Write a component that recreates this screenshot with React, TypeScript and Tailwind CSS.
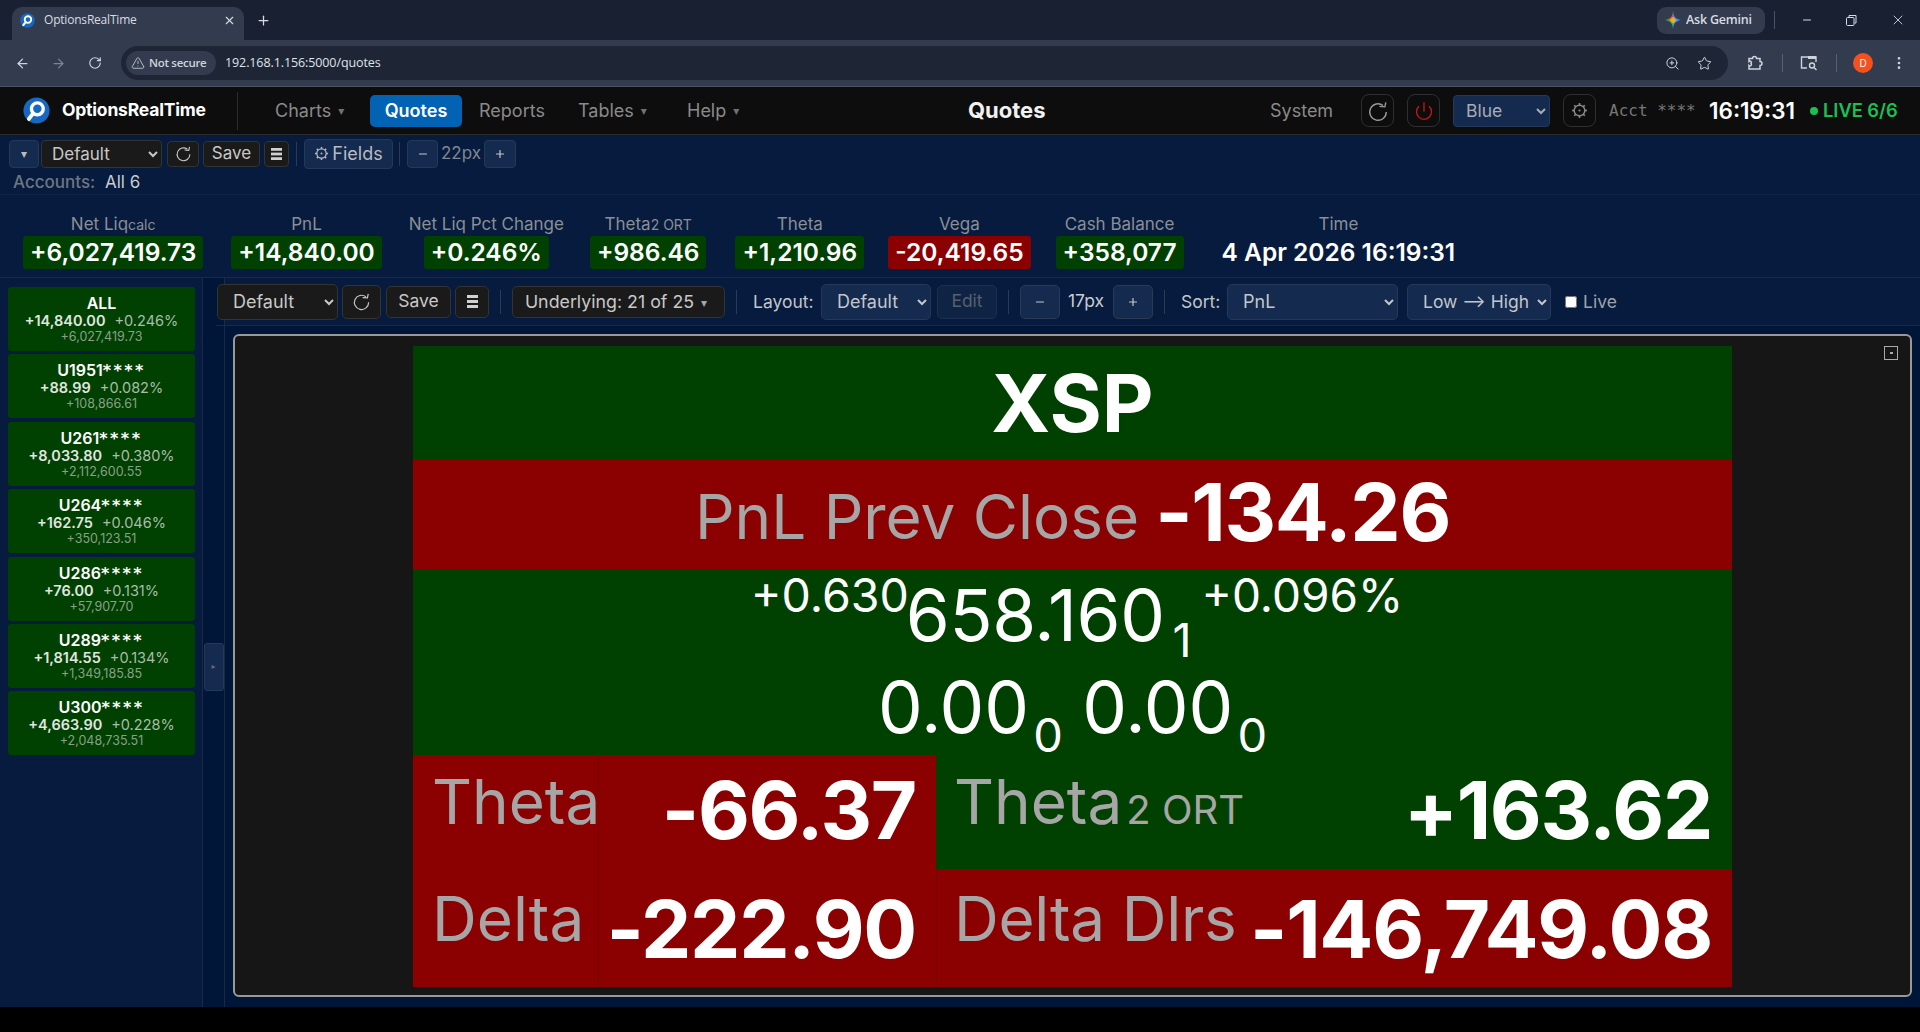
import React from "react";
import { ArrowLeft, ArrowRight, RotateCw, TriangleAlert, ZoomIn, Star, EllipsisVertical, X, Minus, Plus, Power } from "lucide-react";

const Logo = ({ size }: { size: number }) => (
  <svg width={size} height={size} viewBox="0 0 32 32">
    <circle cx="16" cy="16" r="15.5" fill="#1668c0" />
    <circle cx="17" cy="14" r="7" fill="none" stroke="#fff" strokeWidth="4" />
    <path d="M12 19.5 L7 26" stroke="#fff" strokeWidth="4.5" strokeLinecap="round" />
  </svg>
);

const Gemini = () => (
  <svg width="16" height="18" viewBox="0 0 14 16">
    <path d="M7 0 C7.4 4.5 9 7 14 8 L7 8 Z" fill="#4285f4" />
    <path d="M14 8 C9 9 7.4 11.5 7 16 L7 8 Z" fill="#5a8df5" />
    <path d="M7 16 C6.6 11.5 5 9 0 8 L7 8 Z" fill="#34a853" />
    <path d="M0 8 C5 7 6.6 4.5 7 0 L7 8 Z" fill="#ea4335" />
    <path d="M4 8 L7 5 L10 8 L7 11 Z" fill="#fbbc04" opacity="0.85" />
  </svg>
);

const Glyph = ({ className, children }: { className: string; children: React.ReactNode }) => (
  <span className={"font-['DejaVu_Sans',sans-serif] leading-none " + className}>{children}</span>
);

const Reload = ({ size }: { size: number }) => (
  <svg width={size} height={size} viewBox="0 0 24 24" fill="none" stroke="currentColor" strokeWidth="1.5">
    <path d="M17.5 6 A9 9 0 1 0 21 13" />
    <path d="M13.5 7 L19.5 7.5 L20.5 2.5" />
  </svg>
);

const Gear = ({ size }: { size: number }) => (
  <svg width={size} height={size} viewBox="0 0 24 24" fill="none" stroke="currentColor" strokeWidth="2">
    <circle cx="12" cy="12" r="7.5" />
    <circle cx="12" cy="12" r="1.5" fill="currentColor" stroke="none" />
    {[0, 45, 90, 135, 180, 225, 270, 315].map((a) => (
      <path key={a} d="M12 1.5 V4.5" strokeWidth="2.4" transform={`rotate(${a} 12 12)`} />
    ))}
  </svg>
);

const Bars = ({ w, h }: { w: number; h: number }) => (
  <svg width={w} height={h} viewBox="0 0 12 13" preserveAspectRatio="none" fill="currentColor">
    <rect x="0" y="0" width="12" height="3" />
    <rect x="0" y="5" width="12" height="3" />
    <rect x="0" y="10" width="12" height="3" />
  </svg>
);

const Caret = () => <Glyph className="text-[12px] ml-[7px] opacity-80">▾</Glyph>;

const Tb = ({ className, children }: { className: string; children: React.ReactNode }) => (
  <button className={"flex items-center justify-center rounded border shrink-0 " + className}>{children}</button>
);

const Metric = ({ label, sub, value, red, plain }: { label: string; sub?: string; value: string; red?: boolean; plain?: boolean }) => (
  <div className="flex flex-col items-center shrink-0">
    <div className="h-[17px] leading-[17px] text-[17px] text-[#8b8f96] whitespace-nowrap">
      {label}
      {sub && <span className="text-[14px]">{sub}</span>}
    </div>
    <div className={"mt-[3px] h-[33px] leading-[33px] px-[7px] rounded-[3px] text-[24.5px] font-semibold text-white whitespace-nowrap " + (plain ? "" : red ? "bg-[#8b0000]" : "bg-[#004000]")}>
      {value}
    </div>
  </div>
);

const accounts = [
  ["ALL", "", "+14,840.00", "+0.246%", "+6,027,419.73"],
  ["U1951", "****", "+88.99", "+0.082%", "+108,866.61"],
  ["U261", "****", "+8,033.80", "+0.380%", "+2,112,600.55"],
  ["U264", "****", "+162.75", "+0.046%", "+350,123.51"],
  ["U286", "****", "+76.00", "+0.131%", "+57,907.70"],
  ["U289", "****", "+1,814.55", "+0.134%", "+1,349,185.85"],
  ["U300", "****", "+4,663.90", "+0.228%", "+2,048,735.51"],
];

const Divider = ({ className }: { className: string }) => <div className={"w-px h-[24px] bg-[#2c3a52] shrink-0 " + className} />;

export default function App() {
  return (
    <div className="w-[1920px] h-[1032px] overflow-hidden flex flex-col bg-black font-['Inter',sans-serif]">
      {/* browser tabs */}
      <div className="h-[40px] bg-[#182032] flex items-end shrink-0 text-[#d7dbe2] font-['Open_Sans',sans-serif]">
        <div className="ml-[12px] w-[232px] h-[33px] bg-[#333c4e] rounded-t-[10px] flex items-center pl-[8px] pr-[8px] pb-[7px]">
          <Logo size={15} />
          <span className="ml-[9px] text-[12px] flex-1 tracking-[-0.2px]">OptionsRealTime</span>
          <X size={13} strokeWidth={2} />
        </div>
        <div className="ml-[12px] h-[33px] flex items-center pb-[7px]"><Plus size={15} strokeWidth={2} /></div>
        <div className="flex-1" />
        <div className="h-[40px] flex items-center">
          <div className="h-[27px] w-[108px] rounded-[9px] bg-[#333c4e] flex items-center pl-[8px] gap-[5px]">
            <Gemini />
            <span className="text-[12.5px] font-semibold tracking-[-0.2px]">Ask Gemini</span>
          </div>
          <div className="w-px h-[18px] bg-[#485264] ml-[9px]" />
          <Minus size={12} className="ml-[26px]" />
          <svg width="11" height="11" viewBox="0 0 11 11" className="ml-[33px]" fill="none" stroke="#d7dbe2" strokeWidth="1"><rect x="0.5" y="2.5" width="7.5" height="8" rx="1" /><path d="M3 2 V0.5 H10 V8 H8.5" /></svg>
          <X size={16} strokeWidth={1.3} className="ml-[33px] mr-[14px]" />
        </div>
      </div>
      {/* browser toolbar */}
      <div className="h-[47px] bg-[#333c4e] flex items-center shrink-0 border-b border-[#4a5263] text-[#cfd4dc]">
        <ArrowLeft size={15} className="ml-[15px]" />
        <ArrowRight size={15} className="ml-[21px] text-[#7d8593]" />
        <RotateCw size={14} className="ml-[22px]" />
        <div className="ml-[19px] w-[1607px] h-[34px] rounded-full bg-[#1e2636] flex items-center pl-[5px] font-['Open_Sans',sans-serif] shrink-0">
          <div className="h-[24px] w-[90px] rounded-full bg-[#333c4e] flex items-center pl-[5px] gap-[4px] text-[11.5px] font-semibold tracking-[-0.3px]">
            <TriangleAlert size={14} strokeWidth={1.4} />
            Not secure
          </div>
          <span className="ml-[9px] text-[12.5px] text-[#dfe3ea] tracking-[-0.1px]">192.168.1.156:5000/quotes</span>
          <div className="flex-1" />
          <ZoomIn size={15} strokeWidth={1.6} />
          <Star size={15} strokeWidth={1.6} className="ml-[17px] mr-[16px]" />
        </div>
        <svg width="18" height="18" viewBox="0 0 18 18" className="ml-[18px]" fill="none" stroke="#cfd4dc" strokeWidth="1.5"><path d="M3 4.5 H6.5 A2 2 0 0 1 10.5 4.5 H14 V7.5 A2 2 0 0 1 14 11.5 V15 H3 V11.5 A1 1 0 0 0 5 9.5 A1 1 0 0 0 3 7.5 Z" /></svg>
        <div className="w-px h-[18px] bg-[#586172] ml-[18px]" />
        <svg width="18" height="16" viewBox="0 0 18 16" className="ml-[17px]" fill="none" stroke="#cfd4dc" strokeWidth="1.4"><path d="M7 13 H1.5 V2 H16 V7" /><rect x="8" y="1" width="8" height="3" fill="#cfd4dc" stroke="none" /><circle cx="12" cy="10.5" r="2.5" /><path d="M14 12.5 L16.5 15" /></svg>
        <div className="w-px h-[18px] bg-[#586172] ml-[18px]" />
        <div className="ml-[16px] w-[20px] h-[20px] rounded-full bg-[#f4511e] text-white text-[10px] flex items-center justify-center">D</div>
        <EllipsisVertical size={16} className="ml-[18px]" />
      </div>
      {/* app header */}
      <div className="h-[48px] bg-[#0d0d0d] border-b border-[#2b2b2b] flex items-center shrink-0 text-[#8a8a8a] text-[18px]">
        <div className="ml-[23px]"><Logo size={27} /></div>
        <span className="ml-[12px] w-[145px] text-[17.5px] font-bold text-white tracking-[-0.2px] whitespace-nowrap">OptionsRealTime</span>
        <div className="ml-[30px] w-px h-[38px] bg-[#2b2b2b]" />
        <span className="ml-[37px] flex items-center w-[95px]">Charts<Caret /></span>
        <button className="h-[32px] w-[92px] rounded-[5px] bg-[#0262b4] text-white font-semibold text-[18px]">Quotes</button>
        <span className="ml-[17px] w-[99px]">Reports</span>
        <span className="flex items-center w-[109px]">Tables<Caret /></span>
        <span className="flex items-center w-[100px]">Help<Caret /></span>
        <span className="ml-[181px] w-[80px] text-[22px] font-bold text-[#f2f2f2] whitespace-nowrap">Quotes</span>
        <span className="ml-[222px] w-[91px]">System</span>
        <Tb className="w-[33px] h-[33px] rounded-[8px] border-[#2f2f2f] text-[#9a9a9a]"><Reload size={22} /></Tb>
        <Tb className="ml-[13px] w-[33px] h-[33px] rounded-[8px] border-[#2f2f2f] text-[#c21818]"><Power size={20} strokeWidth={1.6} /></Tb>
        <select className="ml-[13px] w-[97px] h-[32px] rounded-[4px] bg-[#142a4e] border border-[#24385a] text-[#a8adb5] text-[17.5px] pl-[8px]"><option>Blue</option></select>
        <Tb className="ml-[13px] w-[33px] h-[33px] rounded-[8px] border-[#2f2f2f] text-[#8a8a8a]"><Gear size={17} /></Tb>
        <span className="ml-[13px] w-[100px] font-['DejaVu_Sans_Mono',monospace] text-[16px] text-[#777] whitespace-nowrap">Acct ****</span>
        <span className="w-[101px] text-[22.5px] font-semibold text-white whitespace-nowrap">16:19:31</span>
        <span className="w-[8px] h-[8px] rounded-full bg-[#19c155] mr-[5px]" />
        <span className="text-[18.3px] font-semibold text-[#19c155] whitespace-nowrap">LIVE 6/6</span>
      </div>
      {/* main column */}
      <div className="flex-1 bg-[#061b3d] flex flex-col min-h-0">
        <div className="h-[36px] flex items-center shrink-0 pt-[1px]">
          <Tb className="ml-[9px] w-[30px] h-[28px] bg-[#142a4e] border-[#24385a] text-[#bbb]"><Glyph className="text-[12px]">▾</Glyph></Tb>
          <select className="ml-[2px] w-[121px] h-[28px] rounded-[4px] bg-[#1a1a1a] border border-[#333] text-[#c8c8c8] text-[17px] pl-[6px]"><option>Default</option></select>
          <Tb className="ml-[5px] w-[32px] h-[26px] bg-[#1a1a1a] border-[#333] text-[#c8c8c8]"><Reload size={17} /></Tb>
          <Tb className="ml-[4px] w-[57px] h-[26px] bg-[#1a1a1a] border-[#333] text-[#c8c8c8] text-[17px]">Save</Tb>
          <Tb className="ml-[4px] w-[25px] h-[26px] bg-[#1a1a1a] border-[#333] text-[#d0d0d0]"><Bars w={11} h={12} /></Tb>
          <Divider className="ml-[7px]" />
          <Tb className="ml-[7px] w-[89px] h-[30px] bg-[#142a4e] border-[#24385a] text-[#b8bcc2] text-[18px] gap-[3px]"><Gear size={15} />Fields</Tb>
          <Divider className="ml-[6px]" />
          <Tb className="ml-[7px] w-[31px] h-[28px] bg-[#142a4e] border-[#24385a] text-[#c8c8c8]"><Minus size={12} strokeWidth={2.4} /></Tb>
          <span className="ml-[3px] w-[43px] text-[17px] text-[#7f8794]">22px</span>
          <Tb className="w-[32px] h-[28px] bg-[#142a4e] border-[#24385a] text-[#c8c8c8]"><Plus size={12} strokeWidth={2.4} /></Tb>
        </div>
        <div className="h-[24px] flex items-center shrink-0 border-b border-[#12233f] pl-[13px] text-[17px]">
          <span className="text-[#6f7682] font-medium w-[92px]">Accounts:</span>
          <span className="text-[#c9ccd1]">All 6</span>
        </div>
        <div className="h-[83px] flex items-start shrink-0 border-b border-[#1a2a45] pl-[23px] pt-[21px]">
          <Metric label="Net Liq" sub="calc" value="+6,027,419.73" />
          <div className="ml-[28px]"><Metric label="PnL" value="+14,840.00" /></div>
          <div className="ml-[27px]"><Metric label="Net Liq Pct Change" value="+0.246%" /></div>
          <div className="ml-[26px]"><Metric label="Theta" sub="2 ORT" value="+986.46" /></div>
          <div className="ml-[29px]"><Metric label="Theta" value="+1,210.96" /></div>
          <div className="ml-[24px]"><Metric label="Vega" value="-20,419.65" red /></div>
          <div className="ml-[25px]"><Metric label="Cash Balance" value="+358,077" /></div>
          <div className="ml-[31px]"><Metric label="Time" value="4 Apr 2026 16:19:31" plain /></div>
        </div>
        <div className="flex-1 flex min-h-0">
          {/* sidebar */}
          <div className="w-[203px] border-r border-[#1a2a45] pl-[8px] pt-[9px] flex flex-col gap-[3.4px] shrink-0">
            {accounts.map((a) => (
              <div key={a[0]} className="w-[187px] h-[64px] rounded-[3px] bg-[#004000] flex flex-col items-center pt-[7px]">
                <div className="h-[18px] text-[16px] leading-[18px] font-semibold text-white">{a[0]}<span className="font-['DejaVu_Sans',sans-serif] font-bold tracking-[2.4px]">{a[1]}</span></div>
                <div className="text-[14.5px] leading-[18px] whitespace-nowrap">
                  <span className="font-semibold text-[#e0e6e0]">{a[2]}</span>
                  <span className="ml-[9px] text-[#a9bda9]">{a[3]}</span>
                </div>
                <div className="text-[12.5px] leading-[14px] text-[#88a088]">{a[4]}</div>
              </div>
            ))}
          </div>
          {/* collapse strip */}
          <div className="w-[22px] bg-[#001638] border-r border-[#1a2a45] flex items-center justify-center shrink-0">
            <div className="w-[20px] h-[48px] mt-[48px] rounded-[3px] bg-[#142a4e] border border-[#24385a] flex items-center justify-center text-[#667]"><Glyph className="text-[8px]">▸</Glyph></div>
          </div>
          {/* content */}
          <div className="flex-1 flex flex-col min-w-0">
            <div className="h-[48px] shrink-0 border-b border-[#1a2a45] flex items-center text-[17.5px] text-[#c2c6cc] ml-[-9px]">
              <select className="ml-[1px] w-[121px] h-[36px] rounded-[5px] bg-[#1a1a1a] border border-[#333] text-[#c8c8c8] text-[18px] pl-[11px]"><option>Default</option></select>
              <Tb className="ml-[4px] w-[39px] h-[34px] rounded-[5px] bg-[#1a1a1a] border-[#333] text-[#c8c8c8]"><Reload size={19} /></Tb>
              <Tb className="ml-[5px] w-[65px] h-[32px] rounded-[5px] bg-[#1a1a1a] border-[#333] text-[#c8c8c8]">Save</Tb>
              <Tb className="ml-[4px] w-[34px] h-[32px] rounded-[5px] bg-[#1a1a1a] border-[#333] text-[#d0d0d0]"><Bars w={11} h={13} /></Tb>
              <Divider className="ml-[11px]" />
              <Tb className="ml-[11px] w-[213px] h-[32px] rounded-[5px] bg-[#1a1a1a] border-[#333] text-[#c8c8c8] text-[17.8px] pt-[2px] pr-[5px]">Underlying: 21 of 25<Caret /></Tb>
              <Divider className="ml-[11px]" />
              <span className="ml-[16px] w-[68px] mt-[2px]">Layout:</span>
              <select className="w-[110px] h-[36px] rounded-[5px] bg-[#142a4e] border border-[#24385a] text-[#c2c6cc] text-[18px] pl-[11px]"><option>Default</option></select>
              <Tb className="ml-[6px] w-[60px] h-[34px] rounded-[5px] bg-[#0f2344] border-[#1c2f50] text-[#56606f]">Edit</Tb>
              <Divider className="ml-[11px]" />
              <Tb className="ml-[11px] w-[40px] h-[34px] rounded-[5px] bg-[#142a4e] border-[#2a3a55] text-[#c8c8c8]"><Minus size={12} strokeWidth={2.4} /></Tb>
              <span className="ml-[8px] w-[45px] text-[#c9ccd1]">17px</span>
              <Tb className="w-[40px] h-[34px] rounded-[5px] bg-[#142a4e] border-[#2a3a55] text-[#c8c8c8]"><Plus size={12} strokeWidth={2.4} /></Tb>
              <Divider className="ml-[11px]" />
              <span className="ml-[16px] w-[46px] mt-[2px]">Sort:</span>
              <select className="w-[171px] h-[36px] rounded-[5px] bg-[#142a4e] border border-[#24385a] text-[#c2c6cc] text-[18px] pl-[11px]"><option>PnL</option></select>
              <select className="ml-[9px] w-[144px] h-[36px] rounded-[5px] bg-[#142a4e] border border-[#24385a] text-[#c2c6cc] text-[17.5px] pl-[11px]"><option>Low ⟶ High</option></select>
              <input type="checkbox" className="ml-[14px] w-[12px] h-[12px]" />
              <span className="ml-[6px] text-[#9ea3ab] mt-[2px]">Live</span>
            </div>
            <div className="flex-1 bg-[#001638] min-h-0 pl-[8px] pr-[8px] pt-[8px]">
              <div className="h-[663px] bg-[#161616] border-2 border-[#999] rounded-[6px] flex pt-[10px] pl-[178px] pr-[10px]">
                <div className="w-[1319px] h-[641px] flex flex-col text-white shrink-0">
                  <div className="h-[114px] bg-[#004000] flex items-center justify-center text-[80px] font-bold leading-none">XSP</div>
                  <div className="h-[110px] bg-[#8b0000] flex items-center justify-center whitespace-nowrap">
                    <span className="text-[62px] text-[#a6a6a6] mt-[2px]">PnL Prev Close</span>
                    <span className="ml-[16px] text-[80px] font-bold tracking-[-1.3px] mt-[-6px]">-134.26</span>
                  </div>
                  <div className="h-[185px] bg-[#004000] flex flex-col items-center">
                    <div className="h-[93px] flex items-start justify-center whitespace-nowrap ml-[9px]">
                      <span className="text-[46.5px] leading-none mt-[2px] w-[155px]">+0.630</span>
                      <span className="text-[71px] tracking-[-0.4px] leading-none mt-[10px]">658.160</span>
                      <span className="text-[47px] leading-none mt-[46px] ml-[8px] w-[29px]">1</span>
                      <span className="text-[46px] leading-none mt-[2px]">+0.096%</span>
                    </div>
                    <div className="flex items-start justify-center whitespace-nowrap mt-[2px]">
                      <span className="text-[71px] leading-none mt-[7px]">0.00</span>
                      <span className="text-[47px] leading-none mt-[46px] ml-[4px] w-[49px]">0</span>
                      <span className="text-[71px] leading-none mt-[7px]">0.00</span>
                      <span className="text-[47px] leading-none mt-[46px] ml-[4px]">0</span>
                    </div>
                  </div>
                  <div className="h-[114px] flex">
                    <div className="w-[523px] bg-[#8b0000] flex">
                      <div className="w-[186px] border-r border-[#7a0000] pl-[19px] pt-[9px] text-[62px] leading-[75px] text-[#a6a6a6]">Theta</div>
                      <div className="flex-1 text-right pr-[20px] pt-[10px] text-[80px] tracking-[-1.3px] leading-[90px] font-bold">-66.37</div>
                    </div>
                    <div className="flex-1 bg-[#004000] flex">
                      <div className="pl-[18px] pt-[9px] text-[62px] leading-[75px] text-[#a6a6a6] whitespace-nowrap">Theta<span className="ml-[4px] text-[40px]">2 ORT</span></div>
                      <div className="flex-1 text-right pr-[20px] pt-[10px] text-[80px] tracking-[-1.3px] leading-[90px] font-bold">+163.62</div>
                    </div>
                  </div>
                  <div className="h-[118px] flex bg-[#8b0000]">
                    <div className="w-[523px] flex">
                      <div className="w-[186px] border-r border-[#7a0000] pl-[19px] pt-[12px] text-[62px] leading-[75px] text-[#a6a6a6]">Delta</div>
                      <div className="flex-1 text-right pr-[20px] pt-[15px] text-[80px] tracking-[-1.3px] leading-[90px] font-bold whitespace-nowrap">-222.90</div>
                    </div>
                    <div className="flex-1 flex border-l border-[#7a0000]">
                      <div className="pl-[17px] pt-[12px] text-[62px] leading-[75px] tracking-[-0.3px] text-[#a6a6a6] whitespace-nowrap">Delta Dlrs</div>
                      <div className="flex-1 text-right pr-[20px] pt-[15px] text-[80px] tracking-[-1.3px] leading-[90px] font-bold whitespace-nowrap">-146,749.08</div>
                    </div>
                  </div>
                </div>
                <div className="ml-[152px] w-[14px] h-[14px] border border-[#aaa] shrink-0 flex items-center justify-center">
                  <div className="w-[3px] h-[2px] bg-[#aaa]" />
                </div>
              </div>
            </div>
          </div>
        </div>
      </div>
      <div className="h-[25px] bg-black shrink-0" />
    </div>
  );
}
